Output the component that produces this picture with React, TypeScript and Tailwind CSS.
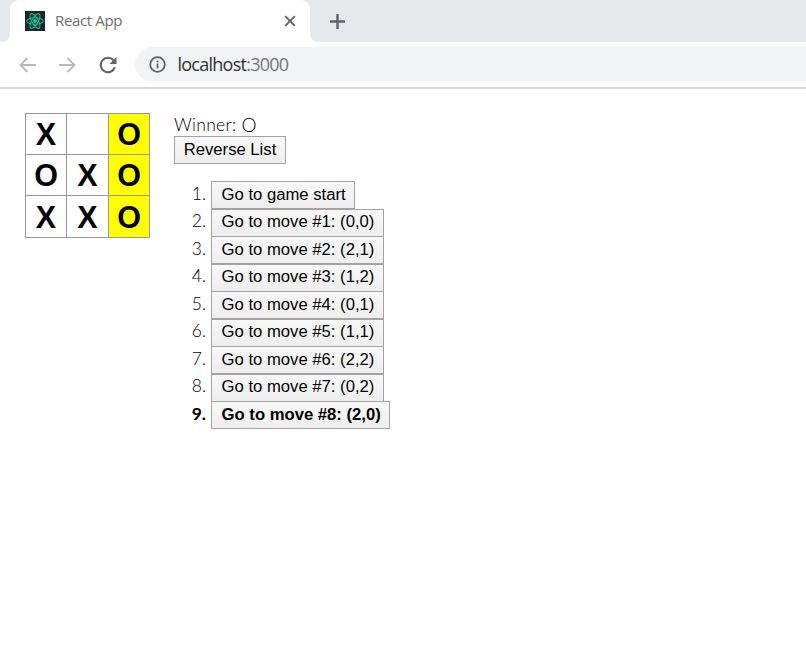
import React from "react";

const board = ["X", "", "O", "O", "X", "O", "X", "X", "O"];
const moves = ["(0,0)", "(2,1)", "(1,2)", "(0,1)", "(1,1)", "(2,2)", "(0,2)", "(2,0)"];
const labels = ["Go to game start", ...moves.map((m, i) => `Go to move #${i + 1}: ${m}`)];

const buttonClass =
  "flex h-7 items-start border border-[#a3a3a3] bg-linear-to-b from-[#f8f8f8] to-[#eeeeee] font-['Liberation_Sans',sans-serif] text-[16.67px] whitespace-nowrap text-black";

function ReactLogo() {
  return (
    <svg width="20" height="20" viewBox="0 0 20 20" className="shrink-0">
      <rect width="20" height="20" fill="#20232a" />
      <g fill="none" stroke="#0fbf92" strokeWidth="1.1">
        <ellipse cx="10" cy="10" rx="8.3" ry="3.2" />
        <ellipse cx="10" cy="10" rx="8.3" ry="3.2" transform="rotate(60 10 10)" />
        <ellipse cx="10" cy="10" rx="8.3" ry="3.2" transform="rotate(120 10 10)" />
      </g>
      <circle cx="10" cy="10" r="1.9" fill="#0fd09e" />
    </svg>
  );
}

function TabStrip() {
  return (
    <div className="flex h-[42px] bg-[#e5e9ec]">
      <div className="flex w-[10px] bg-white">
        <div className="w-full rounded-br-[8px] bg-[#e5e9ec]" />
      </div>
      <div className="bg-[#e5e9ec]">
        <div className="flex h-[42px] w-[300px] items-center rounded-t-[9px] bg-white pl-[15px]">
          <ReactLogo />
          <span className="ml-[10px] pb-[2px] font-['Open_Sans',sans-serif] text-[15px] tracking-[-0.35px] text-[#6b6e72]">React App</span>
          <svg width="12" height="12" viewBox="0 0 12 12" className="mr-[14px] ml-auto" stroke="#5f6368" strokeWidth="1.9">
            <path d="M1.2 1.2 10.8 10.8M10.8 1.2 1.2 10.8" />
          </svg>
        </div>
      </div>
      <div className="flex-1 bg-white">
        <div className="flex h-full items-center rounded-bl-[8px] bg-[#e5e9ec] pl-[20px]">
          <svg width="15" height="15" viewBox="0 0 15 15" stroke="#5f6368" strokeWidth="2.4">
            <path d="M7.5 0V15M0 7.5H15" />
          </svg>
        </div>
      </div>
    </div>
  );
}

function Toolbar() {
  return (
    <div className="flex h-[47px] items-center border-b-2 border-[#d8dae0] pl-[19px]">
      <svg width="17" height="16" viewBox="0 0 17 16" fill="none" stroke="#b8babd" strokeWidth="1.8">
        <path d="M17 8H1.8M8.5 1 1.5 8 8.5 15" />
      </svg>
      <svg width="17" height="16" viewBox="0 0 17 16" fill="none" stroke="#b8babd" strokeWidth="1.8" className="ml-[23px]">
        <path d="M0 8H15.2M8.5 1 15.5 8 8.5 15" />
      </svg>
      <svg width="18" height="18" viewBox="0 0 18 18" className="ml-[23px]">
        <path d="M15.8 11.2A7.2 7.2 0 1 1 14.5 4.4" fill="none" stroke="#5f6368" strokeWidth="2.1" />
        <path d="M17.5 1V8H10.5Z" fill="#5f6368" />
      </svg>
      <div className="ml-[18px] flex h-[35px] flex-1 items-center rounded-l-full bg-[#f1f3f4] pl-[14px]">
        <svg width="17" height="17" viewBox="0 0 17 17" fill="none" stroke="#5f6368" strokeWidth="1.8">
          <circle cx="8.5" cy="8.5" r="7.3" />
          <path d="M8.5 7.6V12.5M8.5 4.5V6.3" />
        </svg>
        <span className="ml-[11.5px] pb-px font-['Open_Sans',sans-serif] text-[18px] leading-[22px] tracking-[-0.75px] text-[#303135]">
          localhost<span className="text-[#74777b]">:3000</span>
        </span>
      </div>
    </div>
  );
}

export default function App() {
  return (
    <div className="min-h-screen overflow-hidden bg-white">
      <TabStrip />
      <Toolbar />
      <div className="flex pt-6 pl-[25px] font-['Lato',sans-serif] text-[17.5px] font-light text-black">
        <div className="grid h-[125px] w-[125px] shrink-0 grid-cols-[41px_42px_41px] grid-rows-[41px_41px_42px] border-t border-l border-[#999999]">
          {board.map((v, i) => (
            <div
              key={i}
              className={`flex items-center justify-center border-r border-b border-[#999999] font-['Liberation_Sans',sans-serif] text-[30.5px] leading-none font-bold ${i % 3 === 2 ? "bg-[#ffff00]" : "bg-white"} ${i > 5 ? "pt-[2px]" : ""}`}
            >
              {v}
            </div>
          ))}
        </div>
        <div className="ml-6">
          <div className="flex h-[23px] leading-[23px]">
            <span className="tracking-[0.3px]">Winner:</span>
            <span className="ml-[5px] text-[19px]">O</span>
          </div>
          <button className={`${buttonClass} w-28 justify-center leading-[26px]`}>Reverse List</button>
          <ol className="mt-[17px]">
            {labels.map((label, i) => {
              const leading = i % 2 === 1 ? "leading-[24.6px]" : "leading-[26px]";
              return (
                <li key={label} className={`flex h-[27.5px] ${leading} ${i === 8 ? "font-bold" : ""}`}>
                  <span className="w-8 shrink-0 text-right">{i + 1}.</span>
                  <button className={`${buttonClass} ${leading} ml-[5px] shrink-0 pr-[8.4px] pl-[9.6px]`}>{label}</button>
                </li>
              );
            })}
          </ol>
        </div>
      </div>
    </div>
  );
}
